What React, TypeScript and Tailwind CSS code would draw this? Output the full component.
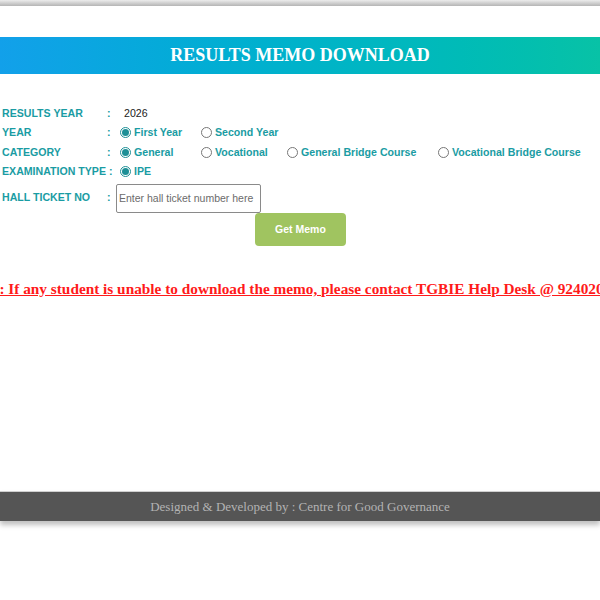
import React from 'react'

type Opt = { label: string; checked?: boolean; w: string }

function Radio({ checked }: { checked?: boolean }) {
  return checked ? (
    <span className="flex h-[11px] w-[11px] items-center justify-center rounded-full border border-[#1d8f96] bg-white">
      <span className="h-[7px] w-[7px] rounded-full bg-[#1d8f96]" />
    </span>
  ) : (
    <span className="h-[11px] w-[11px] rounded-full border border-[#777]" />
  )
}

function RadioGroup({ options }: { options: Opt[] }) {
  return (
    <div className="flex items-center">
      {options.map((o) => (
        <label key={o.label} className={`flex items-center gap-[3px] ${o.w}`}>
          <Radio checked={o.checked} />
          <span className="text-[10.6px] font-bold text-[#1a9ca3]">{o.label}</span>
        </label>
      ))}
    </div>
  )
}

function Row({ label, children, h }: { label: string; children: React.ReactNode; h: string }) {
  return (
    <div className={`flex items-center ${h}`}>
      <div className="w-[105px] shrink-0 whitespace-nowrap pl-[2px] text-[10.6px] font-bold text-[#1a9ca3]">{label}</div>
      <div className="w-[15px] shrink-0 pl-[2px] text-[10.6px] font-bold text-[#1a9ca3]">:</div>
      {children}
    </div>
  )
}

export default function App() {
  return (
    <div className="flex h-[600px] w-[600px] flex-col overflow-hidden bg-white font-['Liberation_Sans',Arial,sans-serif]">
      <div className="h-[6px] bg-gradient-to-b from-[#ececec] to-[#b5b5b5]" />
      <div className="h-[31px]" />
      <div className="flex h-[37px] items-center justify-center bg-gradient-to-r from-[#12a0ea] to-[#08c2a6]">
        <h1 className="font-['Liberation_Serif','Times_New_Roman',serif] text-[18px] font-bold text-white">
          RESULTS MEMO DOWNLOAD
        </h1>
      </div>

      <div className="mt-[30px] flex flex-col">
        <Row label="RESULTS YEAR" h="h-[19px]">
          <span className="pl-[4px] text-[10.6px] text-[#222]">2026</span>
        </Row>
        <Row label="YEAR" h="h-[20px]">
          <RadioGroup
            options={[
              { label: 'First Year', checked: true, w: 'w-[81px]' },
              { label: 'Second Year', w: 'w-[100px]' },
            ]}
          />
        </Row>
        <Row label="CATEGORY" h="h-[19px]">
          <RadioGroup
            options={[
              { label: 'General', checked: true, w: 'w-[81px]' },
              { label: 'Vocational', w: 'w-[86px]' },
              { label: 'General Bridge Course', w: 'w-[151px]' },
              { label: 'Vocational Bridge Course', w: 'w-[150px]' },
            ]}
          />
        </Row>
        <div className="flex h-[19px] items-center">
          <div className="w-[120px] shrink-0 whitespace-nowrap pl-[2px] text-[10.6px] font-bold text-[#1a9ca3]">
            EXAMINATION TYPE :
          </div>
          <RadioGroup options={[{ label: 'IPE', checked: true, w: 'w-[60px]' }]} />
        </div>
        <div className="mt-[2px] flex h-[30px] items-center">
          <div className="w-[105px] shrink-0 whitespace-nowrap pl-[2px] text-[10.6px] font-bold text-[#1a9ca3]">
            HALL TICKET NO
          </div>
          <div className="w-[11px] shrink-0 pl-[2px] text-[10.6px] font-bold text-[#1a9ca3]">:</div>
          <input
            className="h-[29px] w-[145px] rounded-[2px] border border-[#8a8a8a] px-[2px] text-[10.5px] text-[#333] outline-none placeholder:text-[#6b6b6b]"
            placeholder="Enter hall ticket number here"
          />
        </div>
        <div className="flex">
          <button className="ml-[255px] h-[33px] w-[91px] rounded-[4px] bg-[#a0c460] text-[10.5px] font-bold text-white">
            Get Memo
          </button>
        </div>
      </div>

      <div className="mt-[31px] whitespace-nowrap">
        <span className="ml-[-35px] font-['Liberation_Serif','Times_New_Roman',serif] text-[15.3px] font-bold text-[#ff1a1a] underline">
          Note : If any student is unable to download the memo, please contact TGBIE Help Desk @ 9240205555
        </span>
      </div>

      <div className="mt-[190px] flex h-[30px] items-center justify-center border-t border-[#cfcfcf] bg-[#555555] shadow-[0_4px_5px_rgba(0,0,0,0.25)]">
        <span className="font-['Liberation_Serif','Times_New_Roman',serif] text-[13px] text-[#b3b3b3]">
          Designed &amp; Developed by : Centre for Good Governance
        </span>
      </div>
    </div>
  )
}
